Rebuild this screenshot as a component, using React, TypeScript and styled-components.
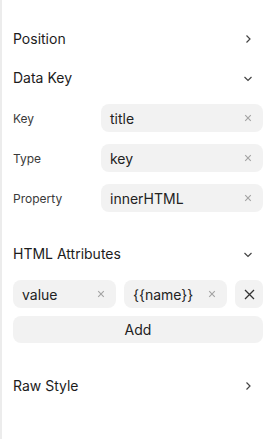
import React from 'react'
import styled, { createGlobalStyle } from 'styled-components'

const GlobalStyle = createGlobalStyle`
  html, body {
    margin: 0;
    padding: 0;
    background: #ffffff;
  }
  body {
    font-family: Inter, "Noto Sans", "Liberation Sans", sans-serif;
    color: #1f1f1f;
  }
`

const Panel = styled('div')`
  box-sizing: border-box;
  width: 272px;
  height: 439px;
  border-left: 2px solid #ececec;
  padding: 19px 9px 0 11px;
`

const Header = styled('div')`
  height: 39px;
  display: flex;
  align-items: center;
  justify-content: space-between;
  font-size: 14px;
  color: #1c1c1c;
`

const Chevron = styled('span')`
  width: 14px;
  height: 14px;
  display: flex;
  align-items: center;
  justify-content: center;
  margin-right: 8px;
  color: #444;
`

const Body = styled('div')`
  display: flex;
  flex-direction: column;
  gap: 12px;
  padding: 7px 0 22px;
`

const AttrBody = styled(Body)`
  gap: 8px;
  padding-bottom: 23px;
`

const Row = styled('div')`
  display: flex;
  align-items: center;
`

const Label = styled('div')`
  width: 88px;
  flex: none;
  font-size: 12px;
  color: #3a3a3a;
`

const Field = styled('div')`
  box-sizing: border-box;
  flex: 1;
  min-width: 0;
  height: 28px;
  display: flex;
  align-items: center;
  justify-content: space-between;
  padding: 0 11px 0 9px;
  border-radius: 8px;
  background: #f2f2f2;
  font-size: 14px;
  color: #222;
`

const Clear = styled('span')`
  display: flex;
  color: #a3a3a3;
`

const AttrRow = styled('div')`
  display: flex;
  gap: 8px;
`

const RemoveButton = styled('button')`
  width: 28px;
  height: 28px;
  flex: none;
  border: none;
  border-radius: 7px;
  background: #f2f2f2;
  display: flex;
  align-items: center;
  justify-content: center;
  padding: 0;
  color: #333;
`

const AddButton = styled('button')`
  height: 27px;
  border: none;
  border-radius: 8px;
  background: #f2f2f2;
  font-family: inherit;
  font-size: 14px;
  color: #222;
`

const ChevronRight = (): JSX.Element => (
  <svg width="8" height="10" viewBox="0 0 8 10" fill="none">
    <path d="M2.5 1.5 L6 5 L2.5 8.5" stroke="currentColor" strokeWidth="1.2" />
  </svg>
)

const ChevronDown = (): JSX.Element => (
  <svg width="10" height="8" viewBox="0 0 10 8" fill="none">
    <path d="M1.5 3 L5 6.5 L8.5 3" stroke="currentColor" strokeWidth="1.2" />
  </svg>
)

const XSmall = (): JSX.Element => (
  <svg width="8" height="8" viewBox="0 0 8 8" fill="none">
    <path d="M1.2 1.2 L6.8 6.8 M6.8 1.2 L1.2 6.8" stroke="currentColor" strokeWidth="1.1" />
  </svg>
)

const XLarge = (): JSX.Element => (
  <svg width="11" height="11" viewBox="0 0 11 11" fill="none">
    <path d="M1 1 L10 10 M10 1 L1 10" stroke="currentColor" strokeWidth="1.3" />
  </svg>
)

const Section = ({ title, open }: { title: string, open: boolean }): JSX.Element => (
  <Header>
    <span>{title}</span>
    <Chevron>{open ? <ChevronDown /> : <ChevronRight />}</Chevron>
  </Header>
)

const Input = ({ value }: { value: string }): JSX.Element => (
  <Field>
    <span>{value}</span>
    <Clear><XSmall /></Clear>
  </Field>
)

const dataKeys = [
  { label: 'Key', value: 'title' },
  { label: 'Type', value: 'key' },
  { label: 'Property', value: 'innerHTML' }
]

const App = (): JSX.Element => {
  return (
    <>
      <GlobalStyle />
      <Panel>
        <Section title="Position" open={false} />
        <Section title="Data Key" open />
        <Body>
          {dataKeys.map(({ label, value }) => (
            <Row key={label}>
              <Label>{label}</Label>
              <Input value={value} />
            </Row>
          ))}
        </Body>
        <Section title="HTML Attributes" open />
        <AttrBody>
          <AttrRow>
            <Input value="value" />
            <Input value="{{name}}" />
            <RemoveButton><XLarge /></RemoveButton>
          </AttrRow>
          <AddButton>Add</AddButton>
        </AttrBody>
        <Section title="Raw Style" open={false} />
      </Panel>
    </>
  )
}

export default App
